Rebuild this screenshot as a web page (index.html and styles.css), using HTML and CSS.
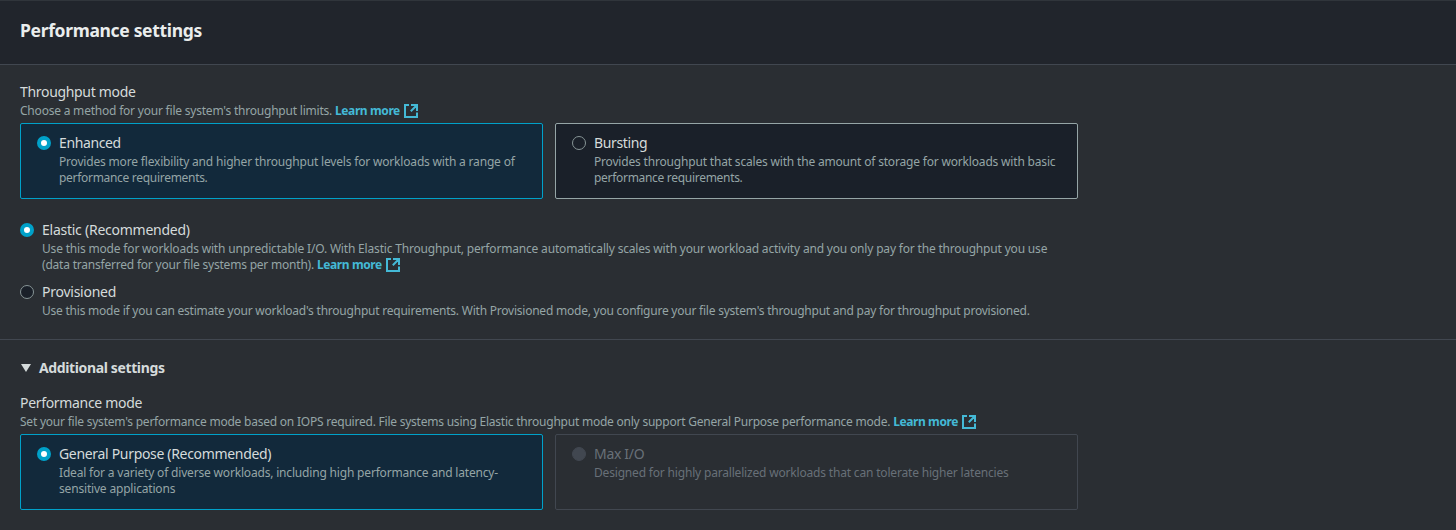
FILE: index.html
```html
<!DOCTYPE html>
<html lang="en">
<head>
<meta charset="utf-8">
<title>Performance settings</title>
<link rel="stylesheet" href="styles.css">
</head>
<body>
<svg class="sprite" aria-hidden="true">
  <symbol id="external" viewBox="0 0 14 14">
    <path d="M5 1H1V13H13V8.5M7 1H13V7M13 1L6.8 7.2" fill="none" stroke="currentColor" stroke-width="2"/>
  </symbol>
</svg>
<main class="panel">
  <header class="panel-header"><h2 class="title">Performance settings</h2></header>
  <section class="throughput">
    <h3 class="label">Throughput mode</h3>
    <p class="desc"><span class="snug">Choose a method for your file system's throughput limits.</span> <a class="link">Learn more<svg class="ext"><use href="#external"/></svg></a></p>
    <div class="tiles">
      <div class="tile selected">
        <span class="radio checked"></span>
        <div>
          <div class="label tight">Enhanced</div>
          <p class="desc">Provides more flexibility and higher throughput levels for workloads with a range of<br><span class="tighter">performance requirements.</span></p>
        </div>
      </div>
      <div class="tile">
        <span class="radio"></span>
        <div>
          <div class="label tight">Bursting</div>
          <p class="desc">Provides throughput that scales with the amount of storage for workloads with basic<br><span class="tighter">performance requirements.</span></p>
        </div>
      </div>
    </div>
    <div class="options">
      <div class="option">
        <span class="radio checked"></span>
        <div>
          <div class="label loose">Elastic (Recommended)</div>
          <p class="desc">Use this mode for workloads with unpredictable I/O. With Elastic Throughput, performance automatically scales with your workload activity and you only pay for the throughput you use<br><span class="snug">(data transferred for your file systems per month).</span> <a class="link">Learn more<svg class="ext"><use href="#external"/></svg></a></p>
        </div>
      </div>
      <div class="option">
        <span class="radio"></span>
        <div>
          <div class="label loose">Provisioned</div>
          <p class="desc compact">Use this mode if you can estimate your workload's throughput requirements. With Provisioned mode, you configure your file system's throughput and pay for throughput provisioned.</p>
        </div>
      </div>
    </div>
  </section>
  <section class="additional">
    <div class="expander"><svg class="caret" viewBox="0 0 10 8"><path d="M0 0H10L5 8Z" fill="currentColor"/></svg><span>Additional settings</span></div>
    <h3 class="label">Performance mode</h3>
    <p class="desc compact">Set your file system's performance mode based on IOPS required. File systems using Elastic throughput mode only support General Purpose performance mode. <a class="link">Learn more<svg class="ext"><use href="#external"/></svg></a></p>
    <div class="tiles">
      <div class="tile selected">
        <span class="radio checked"></span>
        <div>
          <div class="label">General Purpose (Recommended)</div>
          <p class="desc">Ideal for a variety of diverse workloads, including high performance and latency-<br>sensitive applications</p>
        </div>
      </div>
      <div class="tile disabled">
        <span class="radio"></span>
        <div>
          <div class="label">Max I/O</div>
          <p class="desc">Designed for highly parallelized workloads that can tolerate higher latencies</p>
        </div>
      </div>
    </div>
  </section>
</main>
</body>
</html>
```
FILE: styles.css
```css
* { box-sizing: border-box; }
body { margin: 0; background: #2a2e33; color: #d5dbdb; font-family: "Noto Sans", sans-serif; font-size: 14px; line-height: 22px; }
h2, h3, p { margin: 0; font-weight: 400; }
.sprite { display: none; }
.panel { height: 530px; overflow: hidden; border-top: 1px solid #30353b; }
.panel-header { height: 64px; padding: 18px 20px; background: #21252c; border-bottom: 1px solid #414750; }
.title { font-size: 17.5px; font-weight: 700; letter-spacing: -0.33px; color: #eaeded; }
.throughput { padding: 16px 20px 20px; }
.label { font-size: 14px; letter-spacing: -0.32px; white-space: nowrap; }
.label.tight { letter-spacing: -0.38px; }
.label.loose { letter-spacing: -0.25px; }
.desc { font-size: 12px; line-height: 16px; letter-spacing: -0.18px; color: #95a5a6; white-space: nowrap; }
.snug { letter-spacing: -0.21px; }
.desc.compact { letter-spacing: -0.227px; }
.tighter { letter-spacing: -0.3px; }
.link { color: #44b9d6; font-weight: 700; letter-spacing: -0.4px; }
.ext { width: 14px; height: 14px; margin-left: 4px; vertical-align: -3px; }
.tiles { display: grid; grid-template-columns: 523px 523px; gap: 12px; margin-top: 4px; }
.tile { display: flex; gap: 8px; height: 76px; padding: 8px 16px; border: 1px solid #95a5a6; border-radius: 2px; background: #1a2029; }
.tile.selected { border-color: #00a1c9; background: #12293b; }
.tile.disabled { border-color: #414750; background: transparent; }
.radio { flex: none; width: 14px; height: 14px; margin-top: 4px; border: 1px solid #879596; border-radius: 50%; background: #1a2029; }
.radio.checked { border: 4px solid #00a1c9; background: #fff; }
.disabled .radio { border-color: #414750; background: #414750; }
.disabled .label, .disabled .desc { color: #687078; }
.options { display: flex; flex-direction: column; gap: 8px; margin-top: 20px; }
.option { display: flex; gap: 8px; }
.additional { padding: 17px 20px; border-top: 1px solid #414750; }
.expander { display: flex; align-items: center; gap: 8px; margin-bottom: 13px; font-weight: 700; letter-spacing: -0.37px; }
.caret { width: 10px; height: 8px; margin-left: 1px; }
```
